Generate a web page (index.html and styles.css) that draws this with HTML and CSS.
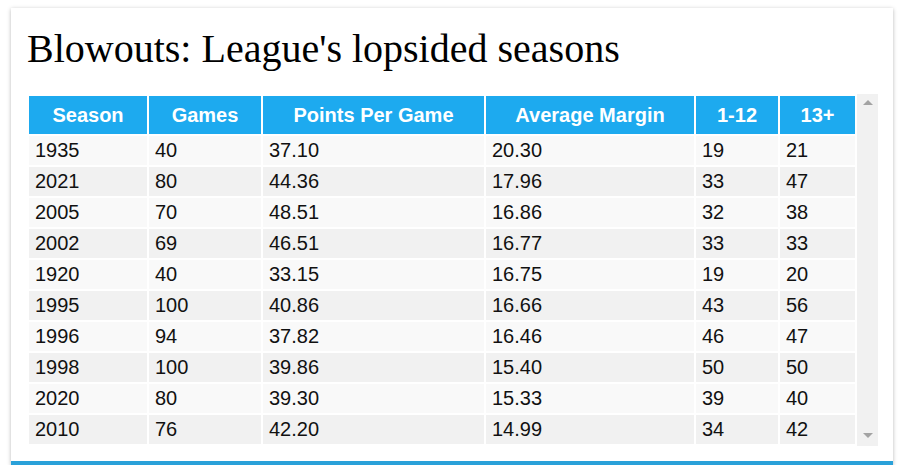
FILE: index.html
```html
<!DOCTYPE html>
<html lang="en">
<head>
<meta charset="utf-8">
<title>Blowouts</title>
<link rel="stylesheet" href="styles.css">
</head>
<body>
<div class="page">
  <section class="card">
    <h1 class="title">Blowouts: League's lopsided seasons</h1>
    <div class="scroller">
      <table class="data">
        <colgroup>
          <col class="c-season"><col class="c-games"><col class="c-ppg"><col class="c-margin"><col class="c-small"><col class="c-big">
        </colgroup>
        <thead>
          <tr><th>Season</th><th>Games</th><th>Points Per Game</th><th>Average Margin</th><th>1-12</th><th>13+</th></tr>
        </thead>
        <tbody>
          <tr><td>1935</td><td>40</td><td>37.10</td><td>20.30</td><td>19</td><td>21</td></tr>
          <tr><td>2021</td><td>80</td><td>44.36</td><td>17.96</td><td>33</td><td>47</td></tr>
          <tr><td>2005</td><td>70</td><td>48.51</td><td>16.86</td><td>32</td><td>38</td></tr>
          <tr><td>2002</td><td>69</td><td>46.51</td><td>16.77</td><td>33</td><td>33</td></tr>
          <tr><td>1920</td><td>40</td><td>33.15</td><td>16.75</td><td>19</td><td>20</td></tr>
          <tr><td>1995</td><td>100</td><td>40.86</td><td>16.66</td><td>43</td><td>56</td></tr>
          <tr><td>1996</td><td>94</td><td>37.82</td><td>16.46</td><td>46</td><td>47</td></tr>
          <tr><td>1998</td><td>100</td><td>39.86</td><td>15.40</td><td>50</td><td>50</td></tr>
          <tr><td>2020</td><td>80</td><td>39.30</td><td>15.33</td><td>39</td><td>40</td></tr>
          <tr><td>2010</td><td>76</td><td>42.20</td><td>14.99</td><td>34</td><td>42</td></tr>
        </tbody>
      </table>
      <div class="scrollbar" aria-hidden="true">
        <span class="arrow arrow-up"></span>
        <span class="arrow arrow-down"></span>
      </div>
    </div>
  </section>
</div>
</body>
</html>
```

FILE: styles.css
```css
html, body {
  margin: 0;
  padding: 0;
  background: #ffffff;
}

.page {
  padding: 8px 15px 0 11px;
}

.card {
  width: 882px;
  box-sizing: border-box;
  background: #ffffff;
  padding: 18px 15px 15px 16px;
  border-bottom: 4px solid #2aa1d9;
  box-shadow: 0 1px 4px rgba(0, 0, 0, 0.28);
}

.title {
  margin: 0 0 22px 0;
  font-family: "Liberation Serif", "Times New Roman", serif;
  font-weight: normal;
  font-size: 40px;
  line-height: 46px;
  color: #000000;
  padding-left: 0;
}

.scroller {
  display: flex;
  align-items: stretch;
}

.data {
  width: 830px;
  border-collapse: separate;
  border-spacing: 2px;
  font-family: "Liberation Sans", Arial, sans-serif;
  font-size: 20px;
  color: #111111;
  table-layout: fixed;
}

.c-season { width: 118px; }
.c-games { width: 112px; }
.c-ppg { width: 221px; }
.c-margin { width: 208px; }
.c-small { width: 82px; }
.c-big { width: 75px; }

.data th {
  background: #1daaef;
  color: #ffffff;
  font-weight: bold;
  height: 38px;
  padding: 0 4px;
  text-align: center;
  line-height: 23px;
  box-sizing: border-box;
}

.data td {
  height: 29px;
  padding: 0 4px 0 6px;
  line-height: 23px;
  text-align: left;
  box-sizing: border-box;
}

.data tbody tr:nth-child(odd) td {
  background: #f9f9f9;
}

.data tbody tr:nth-child(even) td {
  background: #f1f1f1;
}

.scrollbar {
  width: 21px;
  background: #f1f1f1;
  display: flex;
  flex-direction: column;
  justify-content: space-between;
  align-items: center;
  padding: 6px 0 8px 0;
  box-sizing: border-box;
}

.arrow {
  width: 0;
  height: 0;
  border-left: 5px solid transparent;
  border-right: 5px solid transparent;
}

.arrow-up {
  border-bottom: 5px solid #a3a3a3;
}

.arrow-down {
  border-top: 5px solid #a3a3a3;
}
```
